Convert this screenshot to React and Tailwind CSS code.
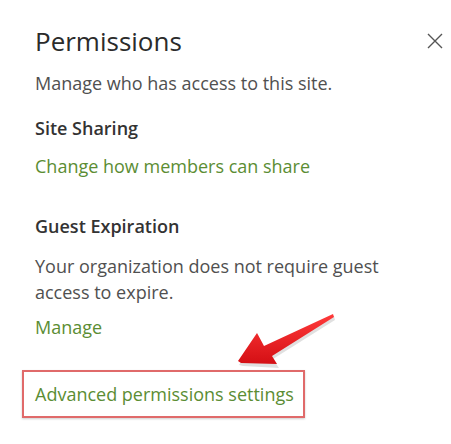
import React from "react";

export default function App() {
  return (
    <div className="relative w-[451px] h-[444px] bg-white overflow-hidden" style={{ fontFamily: '"Open Sans", "Noto Sans", sans-serif' }}>
      <div className="flex flex-col pl-[35px] pt-[24px]">
        <div className="flex items-start justify-between pr-[8px]">
          <h1 className="text-[26px] leading-[34px] font-normal text-[#2b2b2b]">Permissions</h1>
          <svg width="16" height="16" viewBox="0 0 16 16" className="mt-[9px]" fill="none" stroke="#555" strokeWidth="1.4">
            <path d="M1 1 L15 15 M15 1 L1 15" />
          </svg>
        </div>
        <p className="mt-[13px] text-[18px] leading-[24px] text-[#505050]">Manage who has access to this site.</p>
        <h2 className="mt-[21px] text-[18px] leading-[24px] font-semibold text-[#333]">Site Sharing</h2>
        <a className="mt-[14px] text-[18px] leading-[24px] text-[#5b8d33]">Change how members can share</a>
        <h2 className="mt-[36px] text-[18px] leading-[24px] font-semibold text-[#333]">Guest Expiration</h2>
        <p className="mt-[15px] w-[370px] text-[18px] leading-[26px] text-[#505050]">Your organization does not require guest access to expire.</p>
        <a className="mt-[10px] text-[18px] leading-[24px] text-[#5b8d33]">Manage</a>
        <div className="mt-[31px] ml-[-13px] w-[283px] h-[48px] border-2 border-[#e06a6a] shadow-[0_1px_2px_rgba(0,0,0,0.2)] flex items-center pl-[11px]">
          <a className="text-[18px] leading-[24px] text-[#5b8d33] whitespace-nowrap">Advanced permissions settings</a>
        </div>
      </div>
      <svg className="absolute left-0 top-0" width="451" height="444" viewBox="0 0 451 444">
        <defs>
          <linearGradient id="ag" x1="0" y1="0" x2="0" y2="1">
            <stop offset="0" stopColor="#ff3a3a" />
            <stop offset="1" stopColor="#d40f14" />
          </linearGradient>
        </defs>
        <polygon points="238,363 242,364 278,366 272,357 334,318 333,314 264,347 257,333" fill="rgba(0,0,0,0.12)" transform="translate(1,2)" />
        <polygon points="238,361 257,333 264,346 333,314 334,317 272,356 277,364 241,363" fill="url(#ag)" />
      </svg>
    </div>
  );
}
